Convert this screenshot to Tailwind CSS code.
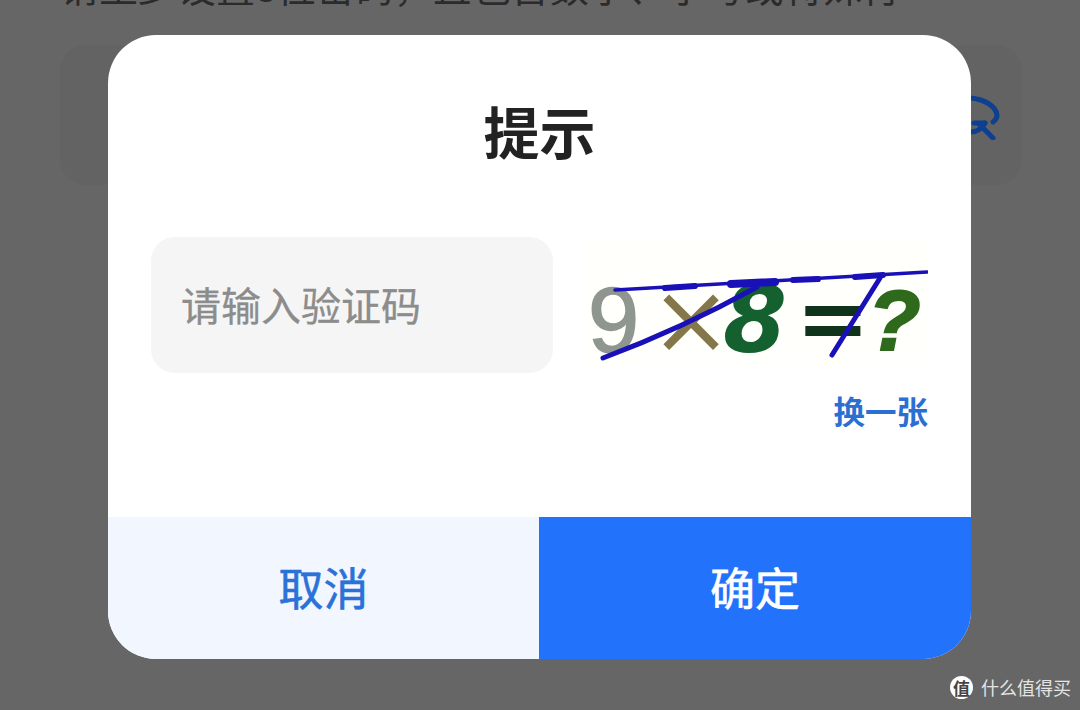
<!DOCTYPE html>
<html lang="zh">
  <head>
    <meta charset="UTF-8" />
    <title>提示</title>
    <script src="https://cdn.jsdelivr.net/npm/@tailwindcss/browser@4"></script>
  </head>
  <body class="relative w-[1080px] h-[710px] overflow-hidden bg-[#666666] font-['Noto_Sans_CJK_SC','Noto_Sans',sans-serif]">
    <!-- page behind the dialog -->
    <div class="px-[60px]">
      <p class="-mt-[37px] h-[45px] text-[39px] leading-[45px] whitespace-nowrap text-[#2b2b2b]">请至少设置8位密码，且包含数字、字母或特殊符</p>
      <div class="mt-[37px] flex h-[140px] w-[962px] items-center justify-end rounded-[26px] bg-[#636363] pr-[20px]">
        <svg class="h-[50px] w-[50px]" viewBox="0 0 50 50" fill="none" stroke="#0f3f8f" stroke-width="5" stroke-linecap="round">
          <path d="M18 8 C32 9 44 16 45 25 Q45 29 41 32" />
          <path d="M18 42 Q28 42 33 33" />
          <path d="M22 33 L33 33" />
          <path d="M27 34 L41 48" />
        </svg>
      </div>
    </div>

    <!-- dialog -->
    <div class="absolute left-[108px] top-[35px] flex h-[624px] w-[863px] flex-col overflow-hidden rounded-[48px] bg-white">
      <h1 class="mt-[56px] h-[78px] text-center text-[56px] leading-[78px] font-bold text-[#222222]">提示</h1>
      <div class="mt-[68px] flex gap-[30px] px-[43px]">
        <div class="flex h-[136px] w-[402px] items-center rounded-[24px] bg-[#f5f5f5] pb-[3px] pl-[30px] text-[40px] text-[#8c8c8c] [-webkit-text-stroke:0.3px]">请输入验证码</div>
        <div class="flex flex-col">
          <svg class="mt-[3px] h-[125px] w-[345px] blur-[0.7px]" viewBox="0 0 345 125">
            <rect width="345" height="125" fill="#fffffc" />
            <text x="5" y="112" font-family="Liberation Sans, sans-serif" font-size="92" stroke="#8f9690" stroke-width="1.5" fill="#8f9690">9</text>
            <text x="67" y="113" font-family="DejaVu Sans, sans-serif" font-size="98" fill="#84784a">×</text>
            <text x="140" y="112" font-family="DejaVu Sans, sans-serif" font-size="92" font-weight="700" font-style="italic" fill="#14602f">8</text>
            <text x="213" y="109" font-family="DejaVu Sans, sans-serif" font-size="88" font-weight="700" fill="#10331c">=</text>
            <text x="285" y="110" font-family="Liberation Sans, sans-serif" font-size="86" font-weight="700" font-style="italic" stroke="#2f6a1c" stroke-width="2" fill="#2f6a1c">?</text>
            <g fill="none" stroke="#1a10b8" stroke-linecap="round">
              <path d="M32 50 L344 32" stroke-width="3.5" />
              <path d="M82 48 L112 46" stroke-width="6" />
              <path d="M148 44 L192 42" stroke-width="8" />
              <path d="M210 40 L235 39" stroke-width="6" />
              <path d="M272 37 L300 35" stroke-width="6" />
              <path d="M20 118 Q100 88 174 47" stroke-width="5" />
              <path d="M249 115 L297 38" stroke-width="5" />
            </g>
          </svg>
          <a class="mt-[25px] text-right text-[31.5px] leading-[40px] font-bold text-[#2a70d2]">换一张</a>
        </div>
      </div>
      <div class="mt-auto flex h-[142px]">
        <button class="w-[431px] bg-[#f2f6fe] pb-[2px] text-[45px] text-[#2a72d8] [-webkit-text-stroke:0.6px]">取消</button>
        <button class="flex-1 bg-[#2272fb] pb-[2px] text-[45px] text-white [-webkit-text-stroke:0.6px]">确定</button>
      </div>
    </div>

    <!-- watermark -->
    <div class="absolute left-[950px] top-[676px] flex items-center gap-[8px] text-[18px] leading-[23px] whitespace-nowrap text-[#e4e4e4]">
      <span class="flex h-[23px] w-[23px] items-center justify-center rounded-full bg-white text-[17px] font-bold text-[#444444]">值</span>
      <span>什么值得买</span>
    </div>
  </body>
</html>
